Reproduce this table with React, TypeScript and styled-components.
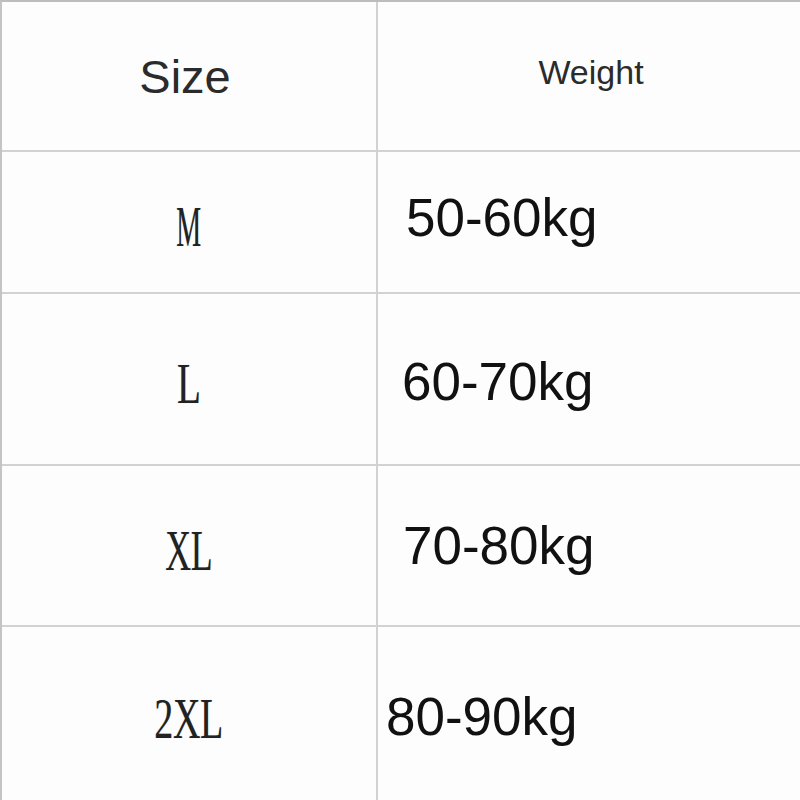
import React from 'react';
import styled, { createGlobalStyle } from 'styled-components';

const GlobalStyle = createGlobalStyle`
	html, body {
		margin: 0;
		padding: 0;
		background: #fdfdfd;
	}
	* {
		box-sizing: border-box;
	}
`;

const Chart = styled.div`
	display: grid;
	grid-template-columns: 376px 1fr;
	grid-template-rows: 150px 142px 172px 161px 1fr;
	width: 800px;
	height: 800px;
	border-top: 2px solid #bdbdbd;
	border-left: 2px solid #c4c4c4;
	background: #fdfdfd;
	overflow: hidden;
`;

const Cell = styled.div<{ $first?: boolean; $last?: boolean }>`
	display: flex;
	align-items: center;
	border-right: ${({ $first }) => ($first ? '2px solid #d2d2d2' : 'none')};
	border-bottom: ${({ $last }) => ($last ? 'none' : '2px solid #d2d2d2')};
`;

const SizeCell = styled(Cell)<{ $drop: number }>`
	justify-content: center;
	padding-top: ${({ $drop }) => $drop}px;
`;

const WeightCell = styled(Cell)<{ $indent: number; $shift: number }>`
	justify-content: flex-start;
	padding-left: ${({ $indent }) => $indent}px;
	padding-top: ${({ $shift }) => Math.max($shift, 0)}px;
	padding-bottom: ${({ $shift }) => Math.max(-$shift, 0)}px;
`;

const HeadCell = styled(Cell)<{ $dx: number; $dy: number }>`
	justify-content: center;
	padding-left: ${({ $dx }) => Math.max($dx, 0)}px;
	padding-right: ${({ $dx }) => Math.max(-$dx, 0)}px;
	padding-bottom: ${({ $dy }) => $dy}px;
`;

const HeadText = styled.span<{ $size: number }>`
	font-family: 'Liberation Sans', Arial, sans-serif;
	font-size: ${({ $size }) => $size}px;
	color: #2b2b2b;
	line-height: 1;
`;

const SizeLabel = styled.span<{ $squeeze: number }>`
	display: inline-block;
	font-family: 'Liberation Serif', 'Times New Roman', serif;
	font-size: 56px;
	line-height: 1;
	color: #222;
	letter-spacing: -0.5px;
	transform: scaleX(${({ $squeeze }) => $squeeze});
	text-shadow: 0 0 1px rgba(0, 0, 0, 0.3);
`;

const WeightText = styled.span`
	font-family: 'Liberation Sans', Arial, sans-serif;
	font-size: 53px;
	line-height: 1;
	color: #111;
`;

const rows = [
	{ size: 'M', squeeze: 0.5, drop: 10, weight: '50-60kg', indent: 28, shift: -10 },
	{ size: 'L', squeeze: 0.7, drop: 10, weight: '60-70kg', indent: 24, shift: 4 },
	{ size: 'XL', squeeze: 0.64, drop: 10, weight: '70-80kg', indent: 25, shift: 0 },
	{ size: '2XL', squeeze: 0.68, drop: 10, weight: '80-90kg', indent: 8, shift: 6 },
];

const App = () => {
	return (
		<>
			<GlobalStyle />
			<Chart>
				<HeadCell $first $dx={-8} $dy={0}>
					<HeadText $size={47}>Size</HeadText>
				</HeadCell>
				<HeadCell $dx={4} $dy={8}>
					<HeadText $size={34}>Weight</HeadText>
				</HeadCell>
				{rows.map((row, i) => (
					<React.Fragment key={row.size}>
						<SizeCell $first $last={i === rows.length - 1} $drop={row.drop}>
							<SizeLabel $squeeze={row.squeeze}>{row.size}</SizeLabel>
						</SizeCell>
						<WeightCell $last={i === rows.length - 1} $indent={row.indent} $shift={row.shift}>
							<WeightText>{row.weight}</WeightText>
						</WeightCell>
					</React.Fragment>
				))}
			</Chart>
		</>
	);
};

export default App;
